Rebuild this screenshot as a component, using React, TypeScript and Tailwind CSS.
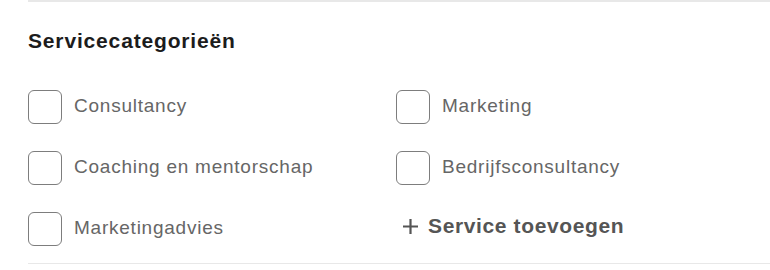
import { useState } from "react";

const FONT = { fontFamily: '"Liberation Sans", Arial, sans-serif' };

const services = [
  ["Consultancy", "Marketing"],
  ["Coaching en mentorschap", "Bedrijfsconsultancy"],
  ["Marketingadvies", null],
] as const;

function Checkbox({ label }: { label: string }) {
  const [checked, setChecked] = useState(false);
  return (
    <label className="flex cursor-pointer items-center gap-[12px]">
      <button
        type="button"
        onClick={() => setChecked((c) => !c)}
        className={
          "h-[34px] w-[34px] shrink-0 rounded-[6px] border-[1.5px] " +
          (checked ? "border-[#333] bg-[#333]" : "border-[#7d7d7d] bg-white")
        }
      />
      <span className="text-[19px] tracking-[0.04em] text-[#666]">{label}</span>
    </label>
  );
}

export default function App() {
  return (
    <div className="w-[770px] bg-white" style={FONT}>
      <div className="ml-[28px] border-t-[2px] border-b-[1.5px] border-[#e8e8e8] pb-[4px]">
        <h3 className="mt-[25px] h-[28px] text-[21px] font-bold leading-[28px] tracking-[0.04em] text-[#1c1c1c]">
          Servicecategorieën
        </h3>
        <div className="mt-[21px] grid grid-cols-[368px_1fr] auto-rows-[61px]">
          {services.map(([left, right], i) => (
            <div key={i} className="contents">
              <div className="flex items-center">
                <Checkbox label={left} />
              </div>
              <div className="flex items-center">
                {right ? (
                  <Checkbox label={right} />
                ) : (
                  <button
                    type="button"
                    className="mb-[5px] ml-[6px] flex items-center gap-[9px] text-[21px] font-bold tracking-[0.03em] text-[#555]"
                  >
                    <svg width="17" height="17" viewBox="0 0 17 17" className="shrink-0">
                      <path d="M8.5 1v15M1 8.5h15" stroke="#555" strokeWidth="2.2" />
                    </svg>
                    Service toevoegen
                  </button>
                )}
              </div>
            </div>
          ))}
        </div>
      </div>
    </div>
  );
}
